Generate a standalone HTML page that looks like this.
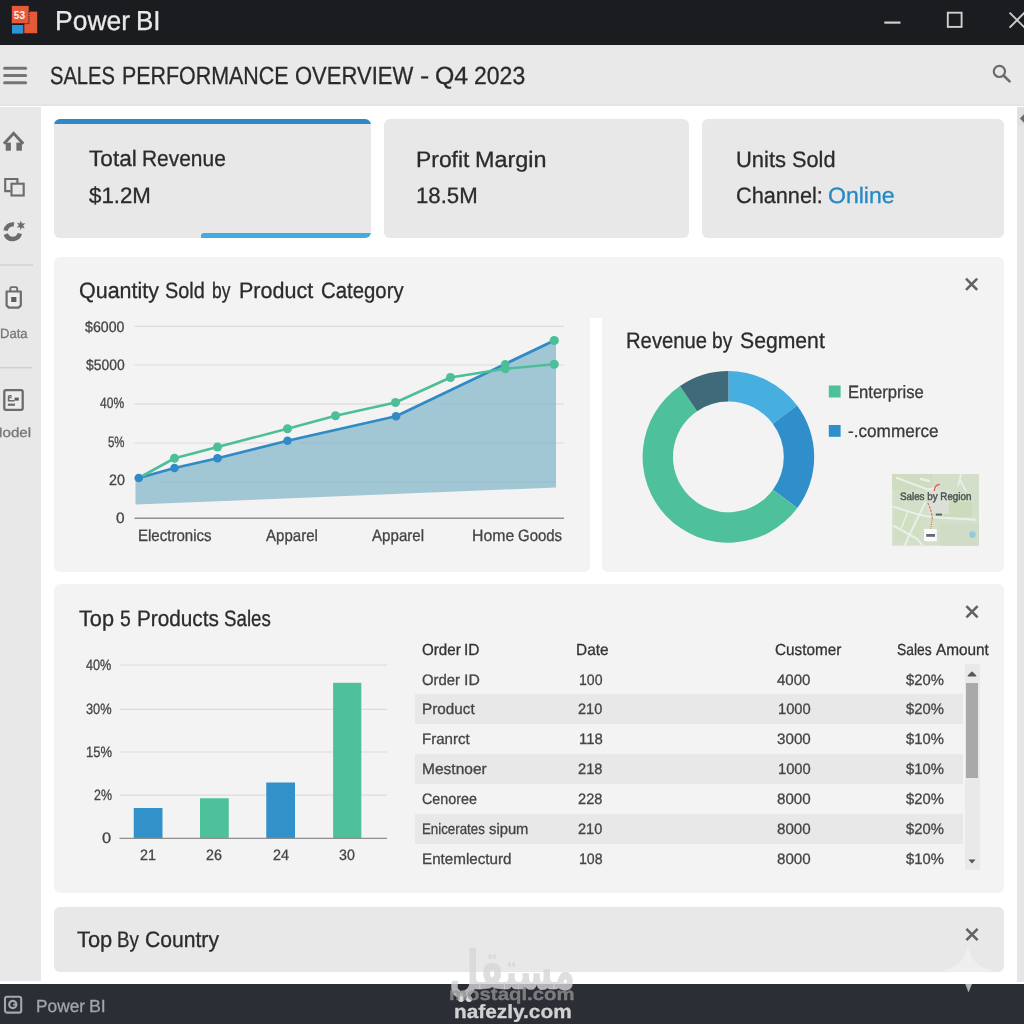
<!DOCTYPE html>
<html lang="en">
<head>
<meta charset="utf-8">
<title>Power BI - Sales Performance Overview</title>
<style>
html,body{margin:0;padding:0;}
body{width:1024px;height:1024px;position:relative;overflow:hidden;background:#fff;font-family:"Liberation Sans","DejaVu Sans",sans-serif;}
.abs{position:absolute;}
.t{position:absolute;white-space:pre;line-height:1;transform-origin:0 0;text-rendering:geometricPrecision;-webkit-text-stroke:0.3px currentColor;}
#titlebar{left:0;top:0;width:1024px;height:44.5px;background:#1b1c20;}
#toolbar{left:0;top:44.5px;width:1024px;height:61.2px;background:#e9e9e9;box-shadow:inset 0 -1.5px 0 #e2e2e2;}
#sidebar{left:0;top:107.2px;width:41px;height:873.8px;background:#e8e8e8;}
#vscroll{left:1017.3px;top:107px;width:7px;height:874.5px;background:#e6e6e6;}
#taskbar{left:0;top:984px;width:1024px;height:40px;background:#2c2e36;}
.card{position:absolute;top:118.8px;height:119px;background:#e8e8e8;border-radius:6px;overflow:hidden;}
.panel{position:absolute;left:54px;width:949.8px;background:#f3f3f3;border-radius:6px;}
.band{position:absolute;left:415.3px;width:547.7px;height:29.7px;background:#e8e8e8;}
</style>
</head>
<body>
<div id="titlebar" class="abs"></div>
<div id="toolbar" class="abs"></div>
<div id="sidebar" class="abs"></div>
<div id="vscroll" class="abs"></div>

<!-- KPI cards -->
<div class="card" style="left:53.8px;width:317.4px;">
  <div class="abs" style="left:0;top:0;width:100%;height:5px;background:#2f89c5;"></div>
  <div class="abs" style="left:147.5px;bottom:0;width:170px;height:5px;background:#41acdd;border-radius:3px 0 0 0;"></div>
</div>
<div class="card" style="left:384.3px;width:304.7px;"></div>
<div class="card" style="left:702.2px;width:301.6px;"></div>

<!-- panels -->
<div class="panel" style="top:257.3px;height:60.4px;border-radius:6px 6px 0 0;"></div>
<div class="panel" style="top:317.5px;height:254px;width:535.6px;border-radius:0 1.5px 6px 6px;"></div>
<div class="panel" style="top:317.5px;height:254px;left:602.2px;width:401.6px;border-radius:1.5px 0 6px 6px;"></div>
<div class="panel" style="top:584.3px;height:308.7px;"></div>
<div class="panel" style="top:907px;height:65.4px;background:#e8e8e8;"></div>

<!-- table stripes and scrollbar -->
<div class="band" style="top:694.3px;"></div>
<div class="band" style="top:754.2px;"></div>
<div class="band" style="top:814.3px;"></div>
<div class="abs" style="left:964.5px;top:664.3px;width:15.5px;height:206px;background:#e9e9e9;"></div>
<div class="abs" style="left:965.8px;top:683px;width:12.2px;height:94.5px;background:#a9a9a9;"></div>

<div id="taskbar" class="abs"></div>

<!-- graphics -->
<svg class="abs" style="left:0;top:0;" width="1024" height="1024" viewBox="0 0 1024 1024">
<g id="logo">
<rect x="24.3" y="11.6" width="12.9" height="21.6" fill="#e4593a"/>
<rect x="11.8" y="5.9" width="16.9" height="17.6" fill="#e65a3b"/>
<path d="M28.9 11.6 V23.7 H12" stroke="#24130f" stroke-width="0.9" fill="none" stroke-dasharray="1.3 0.9"/>
<rect x="12" y="25" width="11.3" height="8.6" fill="#2f92d6"/>
<text x="19.4" y="19.3" font-family="'Liberation Sans',sans-serif" font-size="11.6" font-weight="bold" fill="#f8efe9" text-anchor="middle" textLength="11.2" lengthAdjust="spacingAndGlyphs">53</text>
</g>
<g stroke="#cfcfcf" fill="none" stroke-width="1.9">
<line x1="884.3" y1="22.6" x2="900.5" y2="22.6" stroke-width="2.2"/>
<rect x="947.8" y="12.7" width="13.8" height="14.2"/>
<path d="M1009.6 12.6 L1025 28 M1009.6 27.6 L1025 12.2"/>
</g>
<g stroke="#757575" stroke-width="3" stroke-linecap="round">
<line x1="4.6" y1="68.2" x2="25.6" y2="68.2"/>
<line x1="4.6" y1="75.5" x2="25.6" y2="75.5"/>
<line x1="4.6" y1="82.7" x2="25.6" y2="82.7"/>
</g>
<g stroke="#6b6b6b" fill="none" stroke-width="2.2" stroke-linecap="round">
<circle cx="999.4" cy="71.4" r="5.6"/><line x1="1003.8" y1="75.8" x2="1009.6" y2="81.4" stroke-width="2.6"/>
</g>
<g id="sideicons" stroke="#6c6c6c" fill="none">
<path d="M3.9 143.8 L13.6 133.3 L23.3 143.8" stroke-width="2.9" stroke-linecap="butt"/>
<rect x="5.7" y="142.6" width="5.2" height="8.1" fill="#6c6c6c" stroke="none"/>
<rect x="16.4" y="142.6" width="5.5" height="8.1" fill="#6c6c6c" stroke="none"/>
<path d="M10.6 191.1 H5.2 V179 H17.4 V183.4" stroke-width="2.1"/>
<rect x="11.5" y="183.7" width="12.2" height="11.8" stroke-width="2.1"/>
<path d="M13.95 224.51 A7.2 7.2 0 0 0 5.57 230.60" stroke-width="4.4"/>
<path d="M5.75 234.13 A7.4 7.4 0 0 0 19.85 233.52" stroke-width="4.6"/>
<path d="M20.8 220.6 L22 223.6 L25.2 223.2 L23.2 225.6 L24.6 228.4 L21.6 227.4 L20.6 230.4 L19.8 227.2 L16.8 227.6 L18.8 225.2 L17 222.4 L19.8 223.4 Z" fill="#6c6c6c" stroke="none"/>
</g>
<line x1="0" y1="265" x2="33" y2="265" stroke="#c6c6c6" stroke-width="1"/>
<line x1="0" y1="367.8" x2="32" y2="367.8" stroke="#c6c6c6" stroke-width="1"/>
<g stroke="#6c6c6c" fill="none" stroke-width="2.2">
<path d="M10.3 291 V288.6 Q10.3 287.1 11.8 287.1 H15.7 Q17.2 287.1 17.2 288.6 V291" stroke-width="1.9"/>
<path d="M6.6 291.5 H20.8 V305.4 L18.6 307.6 H8.8 L6.6 305.4 Z" fill="#eeeeee" stroke-linejoin="round"/>
<rect x="11.2" y="297" width="5.2" height="5" fill="#5e5e5e" stroke="none"/>
</g>
<g stroke="#6c6c6c" fill="none" stroke-width="2.3">
<rect x="4.3" y="390.2" width="18.4" height="19.6" rx="1.6" fill="#ececec"/>
<path d="M8.6 395.8 V400.7 H14.6" stroke-width="1.6"/>
<path d="M8.6 395.6 H11 V397.8 H8.6" stroke-width="1.1"/>
<rect x="14.6" y="397.6" width="4.2" height="3" fill="#5e5e5e" stroke="none"/>
<path d="M7.8 404.7 H15" stroke-width="2.2"/>
</g>
<g stroke="#a4a7ad" fill="none" stroke-width="2.1">
<rect x="5" y="996.8" width="16.2" height="15.8" rx="2.2"/>
<circle cx="12.8" cy="1004.5" r="3.6" stroke-width="2.2"/>
<path d="M13 1004.6 H16.6" stroke-width="1.8"/>
</g>
<line x1="134.5" y1="326.4" x2="564" y2="326.4" stroke="#dcdcdc" stroke-width="1.2"/>
<line x1="134.5" y1="365" x2="564" y2="365" stroke="#dcdcdc" stroke-width="1.2"/>
<line x1="134.5" y1="404.2" x2="564" y2="404.2" stroke="#dcdcdc" stroke-width="1.2"/>
<line x1="134.5" y1="443" x2="564" y2="443" stroke="#dcdcdc" stroke-width="1.2"/>
<polygon points="135.5,478.6 174.5,468 217.5,458.25 287.5,440.75 396,416.25 554.25,340.5 556,339.6 556,487.5 135.5,504.6" fill="#a1c7d4"/>
<line x1="300" y1="443" x2="556" y2="443" stroke="#86afbf" stroke-width="1" stroke-dasharray="1.2 1.6" opacity="0.75"/>
<line x1="160" y1="482" x2="556" y2="482" stroke="#86afbf" stroke-width="1" stroke-dasharray="1.2 1.6" opacity="0.75"/>
<line x1="440" y1="404.2" x2="556" y2="404.2" stroke="#86afbf" stroke-width="1" stroke-dasharray="1.2 1.6" opacity="0.75"/>
<line x1="134.5" y1="518.2" x2="564" y2="518.2" stroke="#8f8f8f" stroke-width="1.4"/>
<polyline points="138.75,478 174.5,468 217.5,458.25 287.5,440.75 396,416.25 554.25,340.5" fill="none" stroke="#2f8ac6" stroke-width="2.8" stroke-linejoin="round"/>
<polyline points="138.75,478 174.5,458.25 217.5,447 287.5,428.75 335.5,415.75 395.5,402.5 450.5,377.5 505.25,368.75 554.25,364.25" fill="none" stroke="#4cbf98" stroke-width="2.6" stroke-linejoin="round"/>
<circle cx="138.75" cy="478" r="4.3" fill="#2f8ac6"/>
<circle cx="174.5" cy="468" r="4.3" fill="#2f8ac6"/>
<circle cx="217.5" cy="458.25" r="4.3" fill="#2f8ac6"/>
<circle cx="287.5" cy="440.75" r="4.3" fill="#2f8ac6"/>
<circle cx="396" cy="416.25" r="4.3" fill="#2f8ac6"/>
<circle cx="174.5" cy="458.25" r="4.5" fill="#4cbf98"/>
<circle cx="217.5" cy="447" r="4.5" fill="#4cbf98"/>
<circle cx="287.5" cy="428.75" r="4.5" fill="#4cbf98"/>
<circle cx="335.5" cy="415.75" r="4.5" fill="#4cbf98"/>
<circle cx="395.5" cy="402.5" r="4.5" fill="#4cbf98"/>
<circle cx="450.5" cy="377.5" r="4.5" fill="#4cbf98"/>
<circle cx="505.25" cy="368.75" r="4.5" fill="#4cbf98"/>
<circle cx="554.25" cy="364.25" r="4.5" fill="#4cbf98"/>
<circle cx="505.25" cy="364.4" r="4.3" fill="#4cbf98"/>
<circle cx="554.25" cy="340.5" r="4.6" fill="#4cbf98"/>
<path d="M728.40 371.10 A85.8 85.8 0 0 1 797.10 405.50 L772.76 423.71 A55.4 55.4 0 0 0 728.40 401.50 Z" fill="#47aee0"/>
<path d="M797.10 405.50 A85.8 85.8 0 0 1 797.37 507.94 L772.93 489.85 A55.4 55.4 0 0 0 772.76 423.71 Z" fill="#308fca"/>
<path d="M797.37 507.94 A85.8 85.8 0 1 1 679.93 386.11 L697.10 411.19 A55.4 55.4 0 1 0 772.93 489.85 Z" fill="#4ec19c"/>
<path d="M679.93 386.11 A85.8 85.8 0 0 1 728.40 371.10 L728.40 401.50 A55.4 55.4 0 0 0 697.10 411.19 Z" fill="#3f6a7a"/>
<rect x="828.8" y="385.5" width="11.8" height="12" fill="#4ec19c"/>
<rect x="828.8" y="425" width="11.8" height="11.8" fill="#2f8fca"/>
<g id="minimap">
<rect x="892.2" y="474" width="86.8" height="71.7" fill="#d3dfc8"/>
<rect x="892.2" y="474" width="40" height="16" fill="#cfdcc0"/>
<rect x="944" y="502" width="28" height="15" fill="#cddbbd"/>
<rect x="927" y="490" width="22" height="24" fill="#dadfd8"/>
<rect x="895" y="510" width="26" height="30" fill="#cfddc0" opacity="0.8"/>
<rect x="940" y="524" width="39" height="21.7" fill="#d0dcc6"/>
<g stroke="#eceeea" fill="none" stroke-width="2" stroke-linecap="round">
<path d="M892.8 506.6 L919.5 514.8 L931 517 L975.4 519.8"/>
<path d="M925 503 L908.4 537 L905 545"/>
<path d="M894 526 L917.5 539 L922 545"/>
<path d="M907.4 512.7 L901 529" stroke-width="1.5"/>
<path d="M897 478 L927.7 489.4 L936 488"/>
<path d="M961 474.6 L958 486 M960 480 L966 491" stroke-width="1.6"/>
<path d="M921 479 L929 481" stroke="#e6efef" stroke-width="2.4"/>
</g>
<path d="M939.8 484.3 Q934.6 484.6 934.3 491" stroke="#e2583a" stroke-width="1.2" fill="none"/>
<path d="M927.8 503 Q931.5 510 932.4 518.6" stroke="#e2683f" stroke-width="1.1" fill="none" stroke-dasharray="2.4 1.2"/>
<path d="M932.2 519.5 L930.8 528.5" stroke="#e2683f" stroke-width="1.1" fill="none" stroke-dasharray="1 1.2"/>
<rect x="924.1" y="529" width="12.7" height="12.2" fill="#fcfcfc"/>
<rect x="926.2" y="534" width="8.8" height="2.8" fill="#646878"/>
<rect x="935.8" y="513.6" width="6.2" height="1.9" fill="#555b57"/>
<circle cx="972.4" cy="534.6" r="3.3" fill="#8fc6df" opacity="0.9"/>
</g>
<line x1="119.5" y1="665" x2="387" y2="665" stroke="#dcdcdc" stroke-width="1.2"/>
<line x1="119.5" y1="709.3" x2="387" y2="709.3" stroke="#dcdcdc" stroke-width="1.2"/>
<line x1="119.5" y1="752" x2="387" y2="752" stroke="#dcdcdc" stroke-width="1.2"/>
<line x1="119.5" y1="795.2" x2="387" y2="795.2" stroke="#dcdcdc" stroke-width="1.2"/>
<rect x="133.75" y="808" width="28.75" height="30.00" fill="#3391c9"/>
<rect x="200" y="798.25" width="28.75" height="39.75" fill="#4ec19c"/>
<rect x="266.25" y="782.5" width="28.75" height="55.50" fill="#3391c9"/>
<rect x="333.1" y="682.8" width="28.20" height="155.20" fill="#4ec19c"/>
<line x1="119.5" y1="838.3" x2="387" y2="838.3" stroke="#8f8f8f" stroke-width="1.3"/>
<path d="M966.0 278.59999999999997 L977.2 289.8 M966.0 289.8 L977.2 278.59999999999997" stroke="#626262" stroke-width="2.6" fill="none"/>
<path d="M966.4 606.1999999999999 L977.6 617.4 M966.4 617.4 L977.6 606.1999999999999" stroke="#626262" stroke-width="2.6" fill="none"/>
<path d="M966.4 928.9 L977.6 940.1 M966.4 940.1 L977.6 928.9" stroke="#626262" stroke-width="2.6" fill="none"/>
<path d="M968.4 675.8 L972 672.4 L975.6 675.8 Z" stroke="#5a5a5a" stroke-width="1.6" fill="#5a5a5a" stroke-linejoin="round"/>
<path d="M968.4 859.6 L972 863.4 L975.6 859.6 Z" fill="#555"/>
<rect x="1017.3" y="107" width="7" height="18.5" fill="#e0e0e0"/>
<path d="M1025 113.6 L1020.4 118.5 L1025 123.4 Z" fill="#6a6a6a" stroke="#6a6a6a" stroke-width="1" stroke-linejoin="round"/>
<path d="M968 944 Q969.5 966 993 970.5 Q975 972 968.6 992 Q966 974 942 970.5 Q966 966 968 944 Z" fill="#ffffff" opacity="0.33"/>
<path d="M965.2 984 L968.5 992.4 L971.8 984 Z" fill="#c4c5c9" opacity="0.8"/>
<circle cx="461" cy="999" r="3" fill="#dcdcdc"/><circle cx="469" cy="999" r="3" fill="#dcdcdc"/>
</svg>

<div id="txt" style="position:absolute;left:0;top:0;width:1024px;height:1024px;will-change:transform;">
<span class="t" style="left:54.82px;top:7px;font-size:27.5px;color:#e9e9e9;transform:scaleX(0.9630);">Power</span>
<span class="t" style="left:136.46px;top:7px;font-size:27.5px;color:#e9e9e9;transform:scaleX(0.9437);">BI</span>
<span class="t" style="left:49.60px;top:65px;font-size:24.8px;color:#2a2a2a;transform:scaleX(0.8120);">SALES</span>
<span class="t" style="left:122.04px;top:65px;font-size:24.8px;color:#2a2a2a;transform:scaleX(0.8636);">PERFORMANCE</span>
<span class="t" style="left:294.62px;top:65px;font-size:24.8px;color:#2a2a2a;transform:scaleX(0.8877);">OVERVIEW</span>
<span class="t" style="left:420.12px;top:65px;font-size:24.8px;color:#2a2a2a;transform:scaleX(1.1250);">-</span>
<span class="t" style="left:434.98px;top:65px;font-size:24.8px;color:#2a2a2a;transform:scaleX(1.0034);">Q4</span>
<span class="t" style="left:473.82px;top:65px;font-size:24.8px;color:#2a2a2a;transform:scaleX(0.9277);">2023</span>
<span class="t" style="left:88.58px;top:148px;font-size:22.3px;color:#2b2b2b;transform:scaleX(1.0158);">Total</span>
<span class="t" style="left:141.58px;top:148px;font-size:22.3px;color:#2b2b2b;transform:scaleX(0.9388);">Revenue</span>
<span class="t" style="left:88.57px;top:185px;font-size:22.3px;color:#2b2b2b;transform:scaleX(0.9988);">$1.2M</span>
<span class="t" style="left:415.62px;top:149px;font-size:22.3px;color:#2b2b2b;transform:scaleX(1.0264);">Profit</span>
<span class="t" style="left:475.08px;top:149px;font-size:22.3px;color:#2b2b2b;transform:scaleX(1.0484);">Margin</span>
<span class="t" style="left:415.80px;top:185px;font-size:22.3px;color:#2b2b2b;transform:scaleX(0.9950);">18.5M</span>
<span class="t" style="left:735.81px;top:149px;font-size:22.3px;color:#2b2b2b;transform:scaleX(0.9839);">Units</span>
<span class="t" style="left:792.43px;top:149px;font-size:22.3px;color:#2b2b2b;transform:scaleX(0.9743);">Sold</span>
<span class="t" style="left:736.35px;top:185px;font-size:22.3px;color:#2b2b2b;transform:scaleX(0.9730);">Channel:</span>
<span class="t" style="left:827.60px;top:185px;font-size:22.3px;color:#2489c5;transform:scaleX(1.0330);">Online</span>
<span class="t" style="left:78.53px;top:280px;font-size:22.3px;color:#2b2b2b;transform:scaleX(0.9633);">Quantity</span>
<span class="t" style="left:165.49px;top:280px;font-size:22.3px;color:#2b2b2b;transform:scaleX(0.8918);">Sold</span>
<span class="t" style="left:211.75px;top:280px;font-size:22.3px;color:#2b2b2b;transform:scaleX(0.7820);">by</span>
<span class="t" style="left:239.13px;top:280px;font-size:22.3px;color:#2b2b2b;transform:scaleX(0.9662);">Product</span>
<span class="t" style="left:321.12px;top:280px;font-size:22.3px;color:#2b2b2b;transform:scaleX(0.9135);">Category</span>
<span class="t" style="left:85.34px;top:320px;font-size:15px;color:#444;transform:scaleX(0.9440);">$6000</span>
<span class="t" style="left:86.10px;top:358px;font-size:15px;color:#444;transform:scaleX(0.9255);">$5000</span>
<span class="t" style="left:100.33px;top:396px;font-size:15px;color:#444;transform:scaleX(0.8022);">40%</span>
<span class="t" style="left:107.99px;top:435px;font-size:15px;color:#444;transform:scaleX(0.7625);">5%</span>
<span class="t" style="left:108.79px;top:473px;font-size:15px;color:#444;transform:scaleX(0.9539);">20</span>
<span class="t" style="left:116.11px;top:511px;font-size:15px;color:#444;transform:scaleX(1.0259);">0</span>
<span class="t" style="left:137.50px;top:528px;font-size:16.4px;color:#444;transform:scaleX(0.9177);">Electronics</span>
<span class="t" style="left:265.51px;top:528px;font-size:16.4px;color:#444;transform:scaleX(0.9177);">Apparel</span>
<span class="t" style="left:372.01px;top:528px;font-size:16.4px;color:#444;transform:scaleX(0.9222);">Apparel</span>
<span class="t" style="left:472.19px;top:528px;font-size:16.4px;color:#444;transform:scaleX(0.9646);">Home</span>
<span class="t" style="left:518.09px;top:528px;font-size:16.4px;color:#444;transform:scaleX(0.9132);">Goods</span>
<span class="t" style="left:626.34px;top:330px;font-size:22.3px;color:#2b2b2b;transform:scaleX(0.9081);">Revenue</span>
<span class="t" style="left:712.49px;top:330px;font-size:22.3px;color:#2b2b2b;transform:scaleX(0.8575);">by</span>
<span class="t" style="left:740.46px;top:330px;font-size:22.3px;color:#2b2b2b;transform:scaleX(0.9499);">Segment</span>
<span class="t" style="left:848.13px;top:384px;font-size:17.8px;color:#3a3a3a;transform:scaleX(0.9355);">Enterprise</span>
<span class="t" style="left:848.22px;top:423px;font-size:17.8px;color:#3a3a3a;transform:scaleX(0.9657);">-.commerce</span>
<span class="t" style="left:900.32px;top:492px;font-size:10.9px;color:#48524d;transform:scaleX(0.9000);-webkit-text-stroke:0.45px #48524d;">Sales by Region</span>
<span class="t" style="left:79.00px;top:608px;font-size:22.3px;color:#2b2b2b;transform:scaleX(0.9742);">Top</span>
<span class="t" style="left:120.12px;top:608px;font-size:22.3px;color:#2b2b2b;transform:scaleX(0.8682);">5</span>
<span class="t" style="left:137.05px;top:608px;font-size:22.3px;color:#2b2b2b;transform:scaleX(0.9305);">Products</span>
<span class="t" style="left:224.36px;top:608px;font-size:22.3px;color:#2b2b2b;transform:scaleX(0.8389);">Sales</span>
<span class="t" style="left:86.31px;top:658px;font-size:15px;color:#444;transform:scaleX(0.8453);">40%</span>
<span class="t" style="left:86.09px;top:702px;font-size:15px;color:#444;transform:scaleX(0.8527);">30%</span>
<span class="t" style="left:85.75px;top:745px;font-size:15px;color:#444;transform:scaleX(0.8645);">15%</span>
<span class="t" style="left:93.88px;top:788px;font-size:15px;color:#444;transform:scaleX(0.8271);">2%</span>
<span class="t" style="left:101.82px;top:831px;font-size:15px;color:#444;transform:scaleX(1.0896);">0</span>
<span class="t" style="left:140.09px;top:848px;font-size:15px;color:#444;transform:scaleX(0.9543);">21</span>
<span class="t" style="left:206.39px;top:848px;font-size:15px;color:#444;transform:scaleX(0.9525);">26</span>
<span class="t" style="left:272.68px;top:848px;font-size:15px;color:#444;transform:scaleX(0.9610);">24</span>
<span class="t" style="left:339.07px;top:848px;font-size:15px;color:#444;transform:scaleX(0.9486);">30</span>
<span class="t" style="left:421.85px;top:643px;font-size:16px;color:#333;transform:scaleX(0.9465);">Order</span>
<span class="t" style="left:464.30px;top:643px;font-size:16px;color:#333;transform:scaleX(0.9701);">ID</span>
<span class="t" style="left:576.22px;top:643px;font-size:16px;color:#333;transform:scaleX(0.9630);">Date</span>
<span class="t" style="left:774.79px;top:643px;font-size:16px;color:#333;transform:scaleX(0.9558);">Customer</span>
<span class="t" style="left:897.27px;top:643px;font-size:16px;color:#333;transform:scaleX(0.8628);">Sales</span>
<span class="t" style="left:935.50px;top:643px;font-size:16px;color:#333;transform:scaleX(0.9591);">Amount</span>
<span class="t" style="left:422.45px;top:673px;font-size:15.2px;color:#444;transform:scaleX(0.9792);">Order</span>
<span class="t" style="left:464.42px;top:673px;font-size:15.2px;color:#444;transform:scaleX(1.0385);">ID</span>
<span class="t" style="left:578.91px;top:673px;font-size:15.2px;color:#444;transform:scaleX(0.9270);">100</span>
<span class="t" style="left:777.36px;top:673px;font-size:15.2px;color:#444;transform:scaleX(0.9890);">4000</span>
<span class="t" style="left:905.83px;top:673px;font-size:15.2px;color:#444;transform:scaleX(0.9736);">$20%</span>
<span class="t" style="left:422.23px;top:702px;font-size:15.2px;color:#444;transform:scaleX(1.0053);">Product</span>
<span class="t" style="left:578.17px;top:702px;font-size:15.2px;color:#444;transform:scaleX(0.9569);">210</span>
<span class="t" style="left:778.06px;top:702px;font-size:15.2px;color:#444;transform:scaleX(0.9678);">1000</span>
<span class="t" style="left:905.83px;top:702px;font-size:15.2px;color:#444;transform:scaleX(0.9736);">$20%</span>
<span class="t" style="left:422.24px;top:732px;font-size:15.2px;color:#444;transform:scaleX(0.9929);">Franrct</span>
<span class="t" style="left:578.84px;top:732px;font-size:15.2px;color:#444;transform:scaleX(0.9841);">118</span>
<span class="t" style="left:777.03px;top:732px;font-size:15.2px;color:#444;transform:scaleX(0.9990);">3000</span>
<span class="t" style="left:905.83px;top:732px;font-size:15.2px;color:#444;transform:scaleX(0.9736);">$10%</span>
<span class="t" style="left:422.21px;top:762px;font-size:15.2px;color:#444;transform:scaleX(1.0221);">Mestnoer</span>
<span class="t" style="left:578.16px;top:762px;font-size:15.2px;color:#444;transform:scaleX(0.9621);">218</span>
<span class="t" style="left:778.06px;top:762px;font-size:15.2px;color:#444;transform:scaleX(0.9678);">1000</span>
<span class="t" style="left:905.83px;top:762px;font-size:15.2px;color:#444;transform:scaleX(0.9736);">$10%</span>
<span class="t" style="left:422.23px;top:792px;font-size:15.2px;color:#444;transform:scaleX(0.9431);">Cenoree</span>
<span class="t" style="left:578.16px;top:792px;font-size:15.2px;color:#444;transform:scaleX(0.9621);">228</span>
<span class="t" style="left:777.05px;top:792px;font-size:15.2px;color:#444;transform:scaleX(0.9984);">8000</span>
<span class="t" style="left:905.83px;top:792px;font-size:15.2px;color:#444;transform:scaleX(0.9736);">$20%</span>
<span class="t" style="left:422.39px;top:822px;font-size:15.2px;color:#444;transform:scaleX(0.8755);">Enicerates</span>
<span class="t" style="left:488.64px;top:822px;font-size:15.2px;color:#444;transform:scaleX(0.9735);">sipum</span>
<span class="t" style="left:578.17px;top:822px;font-size:15.2px;color:#444;transform:scaleX(0.9569);">210</span>
<span class="t" style="left:777.05px;top:822px;font-size:15.2px;color:#444;transform:scaleX(0.9984);">8000</span>
<span class="t" style="left:905.83px;top:822px;font-size:15.2px;color:#444;transform:scaleX(0.9736);">$20%</span>
<span class="t" style="left:422.23px;top:852px;font-size:15.2px;color:#444;transform:scaleX(1.0010);">Entemlecturd</span>
<span class="t" style="left:578.90px;top:852px;font-size:15.2px;color:#444;transform:scaleX(0.9321);">108</span>
<span class="t" style="left:777.05px;top:852px;font-size:15.2px;color:#444;transform:scaleX(0.9984);">8000</span>
<span class="t" style="left:905.83px;top:852px;font-size:15.2px;color:#444;transform:scaleX(0.9736);">$10%</span>
<span class="t" style="left:76.50px;top:929px;font-size:22.3px;color:#2b2b2b;transform:scaleX(0.9814);">Top</span>
<span class="t" style="left:117.21px;top:929px;font-size:22.3px;color:#2b2b2b;transform:scaleX(0.8441);">By</span>
<span class="t" style="left:145.13px;top:929px;font-size:22.3px;color:#2b2b2b;transform:scaleX(0.9474);">Country</span>
<span class="t" style="left:35.57px;top:998px;font-size:17.5px;color:#a2a5ab;transform:scaleX(0.9878);">Power</span>
<span class="t" style="left:88.53px;top:998px;font-size:17.5px;color:#a2a5ab;transform:scaleX(1.0145);">BI</span>
<span class="t" style="left:-0.08px;top:327px;font-size:13.4px;color:#777;transform:scaleX(0.9733);">Data</span>
<span class="t" style="left:-9.75px;top:426px;font-size:13.4px;color:#777;transform:scaleX(1.1262);">Model</span>
<span class="t" style="left:448.55px;top:944px;font-size:54px;color:rgba(214,214,214,0.8);transform:scaleX(0.6382);font-weight:bold;font-family:'DejaVu Sans',sans-serif;">مستقل</span>
<span class="t" style="left:448.59px;top:986px;font-size:17.5px;color:rgba(150,150,150,0.75);transform:scaleX(1.1631);font-weight:bold;">mostaql.com</span>
<span class="t" style="left:453.58px;top:1003px;font-size:19px;color:rgba(222,222,222,0.92);transform:scaleX(1.0960);font-weight:bold;">nafezly.com</span>
</div>
</body>
</html>
